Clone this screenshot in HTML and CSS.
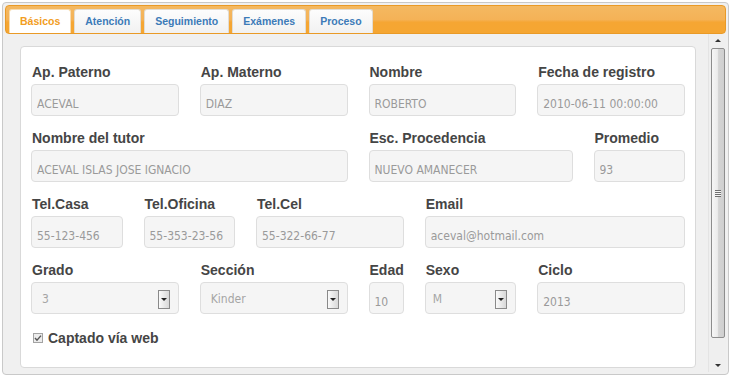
FILE: index.html
```html
<!DOCTYPE html>
<html lang="es">
<head>
    <meta charset="UTF-8">
    <meta name="viewport" content="width=device-width, initial-scale=1.0">
    <title>Alumno - Básicos</title>
    <link rel="stylesheet" href="styles.css">
</head>
<body>
    <div class="panel">
        <ul class="tabs">
            <li class="tab active">Básicos</li>
            <li class="tab">Atención</li>
            <li class="tab">Seguimiento</li>
            <li class="tab">Exámenes</li>
            <li class="tab">Proceso</li>
        </ul>

        <div class="main">
            <div class="scroll-area">
                <form class="card">
                    <div class="grid">
                        <div class="span3"><label>Ap. Paterno</label><input class="input" value="ACEVAL" readonly></div>
                        <div class="span3"><label>Ap. Materno</label><input class="input" value="DIAZ" readonly></div>
                        <div class="span3"><label>Nombre</label><input class="input" value="ROBERTO" readonly></div>
                        <div class="span3"><label>Fecha de registro</label><input class="input" value="2010-06-11 00:00:00" readonly></div>

                        <div class="span6"><label>Nombre del tutor</label><input class="input" value="ACEVAL ISLAS JOSE IGNACIO" readonly></div>
                        <div class="span4"><label>Esc. Procedencia</label><input class="input" value="NUEVO AMANECER" readonly></div>
                        <div class="span2"><label>Promedio</label><input class="input" value="93" readonly></div>

                        <div class="span2"><label>Tel.Casa</label><input class="input" value="55-123-456" readonly></div>
                        <div class="span2"><label>Tel.Oficina</label><input class="input" value="55-353-23-56" readonly></div>
                        <div class="span3"><label>Tel.Cel</label><input class="input" value="55-322-66-77" readonly></div>
                        <div class="span5"><label>Email</label><input class="input" value="aceval@hotmail.com" readonly></div>

                        <div class="span3"><label>Grado</label><div class="select"><span>3</span><span class="select-btn"></span></div></div>
                        <div class="span3"><label>Sección</label><div class="select"><span>Kinder</span><span class="select-btn"></span></div></div>
                        <div class="span1"><label>Edad</label><input class="input" value="10" readonly></div>
                        <div class="span2"><label>Sexo</label><div class="select select-narrow"><span>M</span><span class="select-btn"></span></div></div>
                        <div class="span3"><label>Ciclo</label><input class="input" value="2013" readonly></div>
                    </div>

                    <div class="check-row">
                        <svg class="check" width="10" height="10" viewBox="0 0 10 10">
                            <rect x="0.5" y="0.5" width="9" height="9" fill="#ececec" stroke="#a3a3a3"/>
                            <polyline points="2,5 4,7.3 8,2.6" fill="none" stroke="#555" stroke-width="1.4"/>
                        </svg>
                        <span>Captado vía web</span>
                    </div>
                </form>
            </div>

            <div class="scrollbar">
                <div class="sb-btn"><span class="arrow-up"></span></div>
                <div class="sb-track">
                    <div class="sb-thumb"><span class="grip"></span></div>
                </div>
                <div class="sb-btn"><span class="arrow-down"></span></div>
            </div>
        </div>
    </div>
</body>
</html>
```

FILE: styles.css
```css
body {
    margin: 0;
    background: #fff;
    font-family: "Liberation Sans", Arial, sans-serif;
}

.panel {
    margin: 2px 3px 4px 2px;
    padding: 2px;
    height: 367px;
    border: 1px solid #c9c9c9;
    border-radius: 4px;
    background: #f0f0f0;
    display: flex;
    flex-direction: column;
}

/* tab strip */
.tabs {
    list-style: none;
    margin: 0;
    padding: 3px 0 0 3px;
    height: 24px;
    display: flex;
    gap: 3px;
    align-items: flex-end;
    border: 1px solid #e99a27;
    border-radius: 4px;
    background: linear-gradient(#f4b961, #f4b257 50%, #f5a633 60%, #f5a632);
}

.tab {
    height: 23px;
    line-height: 23px;
    padding: 0 10px;
    border: 1px solid #e2dcd2;
    border-bottom: 0;
    border-radius: 3px 3px 0 0;
    background: linear-gradient(#fdfdfd, #f1f1f1);
    color: #3c7bb8;
    font-size: 10.5px;
    font-weight: bold;
}

.tab.active {
    background: #fff;
    border-color: #f8dcb0;
    color: #f29d22;
}

.main {
    flex: 1;
    display: flex;
}

.scroll-area {
    flex: 1;
    padding: 12px 12px 0 15px;
}

.card {
    box-sizing: border-box;
    height: 322px;
    margin: 0;
    padding: 15px 10px 0;
    background: #fff;
    border: 1px solid #d9d9d9;
    border-radius: 4px;
}

.grid {
    display: grid;
    grid-template-columns: repeat(12, 1fr);
    column-gap: 21px;
    row-gap: 12px;
}

.span1 { grid-column: span 1; }
.span2 { grid-column: span 2; }
.span3 { grid-column: span 3; }
.span4 { grid-column: span 4; }
.span5 { grid-column: span 5; }
.span6 { grid-column: span 6; }

label {
    display: block;
    margin-bottom: 2px;
    padding-left: 1px;
    font-size: 14px;
    line-height: 20px;
    font-weight: bold;
    color: #454545;
    white-space: nowrap;
}

.input {
    display: block;
    box-sizing: border-box;
    width: 100%;
    height: 32px;
    margin: 0;
    padding: 8px 5px 0;
    border: 1px solid #dedede;
    border-radius: 4px;
    background: #f5f5f5;
    color: #9a9a9a;
    font-family: "DejaVu Sans Condensed", "DejaVu Sans", sans-serif;
    font-size: 12px;
    outline: none;
}

.select {
    box-sizing: border-box;
    height: 32px;
    padding: 2px 8px 0 10px;
    display: flex;
    align-items: center;
    justify-content: space-between;
    border: 1px solid #dedede;
    border-radius: 4px;
    background: #f5f5f5;
    color: #a5a5a5;
    font-family: "DejaVu Sans Condensed", "DejaVu Sans", sans-serif;
    font-size: 12px;
}

.select-narrow {
    padding-left: 7px;
}

.select-btn {
    box-sizing: border-box;
    width: 12px;
    height: 19px;
    display: flex;
    align-items: center;
    justify-content: center;
    border: 1px solid #8a8a8a;
    background: linear-gradient(90deg, #fafafa, #d8d8d8);
}

.select-btn::before {
    content: "";
    border-top: 3px solid #222;
    border-left: 3px solid transparent;
    border-right: 3px solid transparent;
}

.check-row {
    margin-top: 14px;
    padding-left: 2px;
    display: flex;
    align-items: center;
    gap: 5px;
    font-size: 14px;
    line-height: 20px;
    font-weight: bold;
    color: #454545;
}

/* fake scrollbar */
.scrollbar {
    width: 17px;
    display: flex;
    flex-direction: column;
    background: #efefef;
    border-left: 1px solid #e4e4e4;
}

.sb-btn {
    height: 13px;
    display: flex;
    align-items: center;
    justify-content: center;
}

.arrow-up {
    border-bottom: 3px solid #333;
    border-left: 3px solid transparent;
    border-right: 3px solid transparent;
}

.arrow-down {
    border-top: 3px solid #333;
    border-left: 3px solid transparent;
    border-right: 3px solid transparent;
}

.sb-track {
    flex: 1;
    padding: 1px 1px 0 2px;
}

.sb-thumb {
    box-sizing: border-box;
    height: 290px;
    display: flex;
    align-items: center;
    justify-content: center;
    border: 1px solid #8d8d8d;
    border-radius: 2px;
    background: linear-gradient(90deg, #f6f6f6, #ececec 45%, #d4d4d4 55%, #cfcfcf);
}

.grip {
    width: 6px;
    height: 7px;
    background: repeating-linear-gradient(#6f6f6f 0 1px, #f4f4f4 1px 2px);
}
```
